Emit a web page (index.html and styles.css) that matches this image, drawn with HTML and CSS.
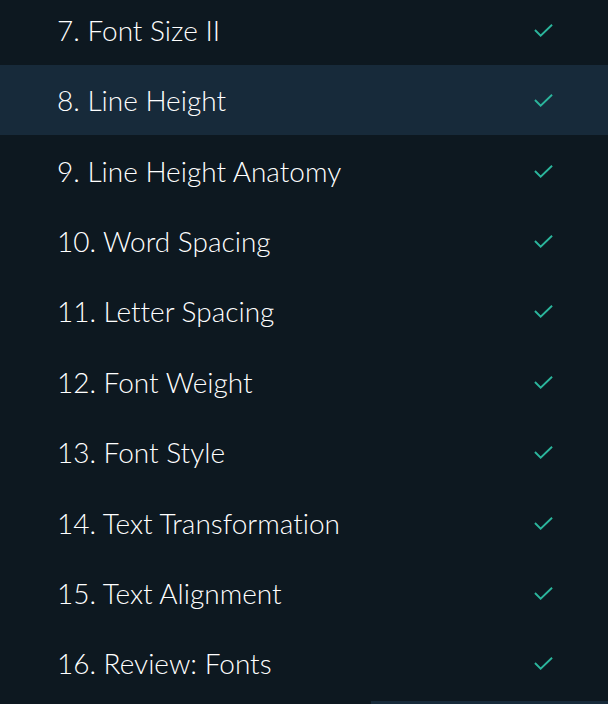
FILE: index.html
```html
<!DOCTYPE html>
<html>
<head>
<meta charset="utf-8">
<link rel="stylesheet" href="styles.css">
</head>
<body>
<div class="page">
  <ul class="lessons">
    <li class="lesson"><span class="title">7. Font Size II</span><svg class="check" viewBox="0 0 20 14"><path d="M1 7 L7 13 L19 1.5"/></svg></li>
    <li class="lesson active"><span class="title">8. Line Height</span><svg class="check" viewBox="0 0 20 14"><path d="M1 7 L7 13 L19 1.5"/></svg></li>
    <li class="lesson"><span class="title">9. Line Height Anatomy</span><svg class="check" viewBox="0 0 20 14"><path d="M1 7 L7 13 L19 1.5"/></svg></li>
    <li class="lesson"><span class="title">10. Word Spacing</span><svg class="check" viewBox="0 0 20 14"><path d="M1 7 L7 13 L19 1.5"/></svg></li>
    <li class="lesson"><span class="title">11. Letter Spacing</span><svg class="check" viewBox="0 0 20 14"><path d="M1 7 L7 13 L19 1.5"/></svg></li>
    <li class="lesson"><span class="title">12. Font Weight</span><svg class="check" viewBox="0 0 20 14"><path d="M1 7 L7 13 L19 1.5"/></svg></li>
    <li class="lesson"><span class="title">13. Font Style</span><svg class="check" viewBox="0 0 20 14"><path d="M1 7 L7 13 L19 1.5"/></svg></li>
    <li class="lesson"><span class="title">14. Text Transformation</span><svg class="check" viewBox="0 0 20 14"><path d="M1 7 L7 13 L19 1.5"/></svg></li>
    <li class="lesson"><span class="title">15. Text Alignment</span><svg class="check" viewBox="0 0 20 14"><path d="M1 7 L7 13 L19 1.5"/></svg></li>
    <li class="lesson"><span class="title">16. Review: Fonts</span><svg class="check" viewBox="0 0 20 14"><path d="M1 7 L7 13 L19 1.5"/></svg></li>
  </ul>
  <div class="footer-bar"></div>
</div>
</body>
</html>
```
FILE: styles.css
```css
html, body {
  margin: 0;
  padding: 0;
  background: #0d1820;
  height: 100%;
  overflow: hidden;
}
.page {
  font-family: Lato, "Open Sans", sans-serif;
  color: #ffffff;
}
.lessons {
  list-style: none;
  margin: -5.4px 0 0 0;
  padding: 0;
}
.lesson {
  height: 70.4px;
  display: flex;
  align-items: center;
  justify-content: space-between;
  padding: 0 55px 0 57px;
  box-sizing: border-box;
}
.lesson.active {
  background: #172a3a;
}
.title {
  font-size: 28px;
  font-weight: 300;
  letter-spacing: 0;
  font-variant-ligatures: none;
  font-feature-settings: "liga" 0, "dlig" 0;
}
.check {
  width: 19px;
  height: 14px;
  fill: none;
  stroke: #2bb59c;
  stroke-width: 2;
}
.footer-bar {
  margin: 2.2px 0 0 371px;
  height: 4px;
  background: #172a3a;
}
```
